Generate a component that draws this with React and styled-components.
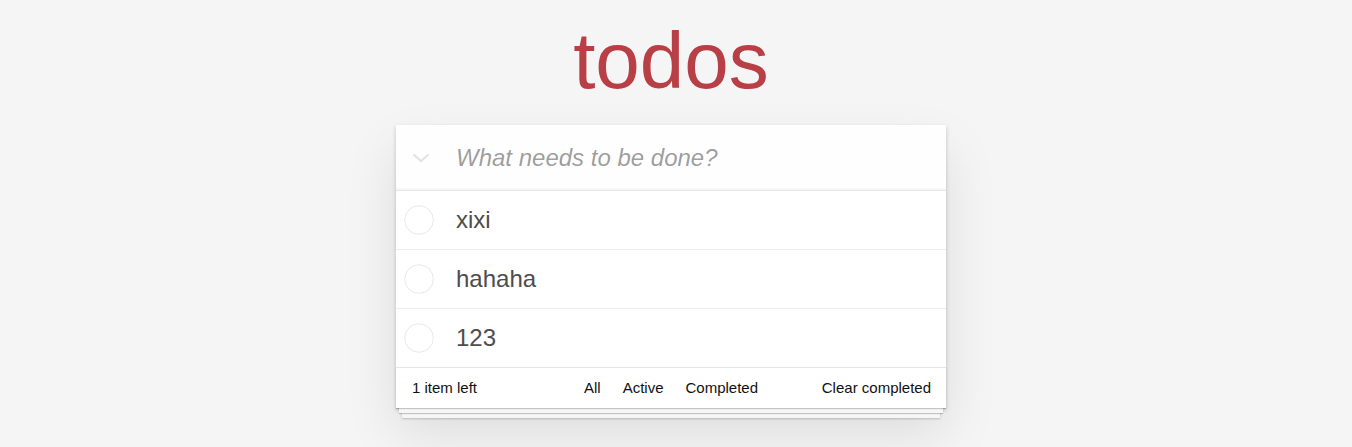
import React from "react";
import styled, { createGlobalStyle } from "styled-components";

const GlobalStyle = createGlobalStyle`
  html, body {
    margin: 0;
    padding: 0;
  }
  body {
    background: #f5f5f5;
    color: #111111;
    font: 14px "Liberation Sans", Arial, Helvetica, sans-serif;
    line-height: 1.4em;
    font-weight: 300;
  }
  * { box-sizing: border-box; }
`;

const Page = styled.div`
  display: flex;
  justify-content: center;
  padding: 15px 10px 40px 0;
`;

const App = styled.section`
  width: 550px;
  display: flex;
  flex-direction: column;
`;

const Title = styled.h1`
  margin: 0 0 18px;
  font-size: 80px;
  line-height: 92px;
  font-weight: 200;
  text-align: center;
  color: #b83f45;
`;

const Card = styled.div`
  background: #fff;
  box-shadow: 0 2px 4px 0 rgba(0, 0, 0, 0.2), 0 25px 50px 0 rgba(0, 0, 0, 0.1);
`;

const NewTodoRow = styled.header`
  display: flex;
  align-items: center;
  height: 65px;
  background: rgba(0, 0, 0, 0.003);
  box-shadow: inset 0 -2px 1px rgba(0, 0, 0, 0.03);
`;

const ToggleAll = styled.label`
  display: flex;
  align-items: center;
  justify-content: center;
  width: 49px;
  height: 65px;
  flex: none;
  cursor: pointer;
`;

const NewTodo = styled.input`
  flex: 1;
  min-width: 0;
  height: 65px;
  margin: 0;
  padding: 16px 16px 16px 11px;
  border: none;
  outline: none;
  background: transparent;
  font-family: inherit;
  font-size: 24px;
  line-height: 1.4em;
  color: #4d4d4d;

  &::placeholder {
    font-style: italic;
    font-weight: 400;
    color: rgba(0, 0, 0, 0.4);
  }
`;

const List = styled.ul`
  margin: 0;
  padding: 0;
  list-style: none;
  border-top: 1px solid #e6e6e6;
`;

const Item = styled.li`
  display: flex;
  align-items: center;
  font-size: 24px;
  border-bottom: 1px solid #ededed;

  &:last-child {
    border-bottom: none;
  }
`;

const Toggle = styled.span`
  display: flex;
  flex: none;
  width: 30px;
  height: 30px;
  margin-left: 8px;
`;

const ItemLabel = styled.label`
  flex: 1;
  padding: 15px 15px 15px 22px;
  line-height: 28px;
  font-weight: 400;
  color: #4d4d4d;
  word-break: break-all;
`;

const Footer = styled.footer`
  display: grid;
  grid-template-columns: 1fr auto 1fr;
  align-items: center;
  height: 41px;
  padding: 10px 15px;
  border-top: 1px solid #e6e6e6;
  font-size: 15px;
  line-height: 19.6px;
  color: #111;
  box-shadow: 0 1px 1px rgba(0, 0, 0, 0.2), 0 8px 0 -3px #f6f6f6,
    0 9px 1px -3px rgba(0, 0, 0, 0.2), 0 16px 0 -6px #f6f6f6,
    0 17px 2px -6px rgba(0, 0, 0, 0.2);
`;

const Count = styled.span`
  justify-self: start;
  padding-left: 1px;
`;

const Filters = styled.ul`
  display: flex;
  margin: 0;
  padding: 0;
  list-style: none;
`;

const FilterLink = styled.a`
  margin: 3px;
  padding: 3px 7px;
  border: 1px solid ${(p) => (p.$selected ? "rgba(175, 47, 47, 0.2)" : "transparent")};
  border-radius: 3px;
  color: inherit;
  text-decoration: none;
`;

const ClearButton = styled.button`
  justify-self: end;
  margin: 0;
  padding: 0;
  border: none;
  background: none;
  font: inherit;
  line-height: 19.6px;
  color: inherit;
  cursor: pointer;
`;

const Chevron = () => (
  <svg width="18" height="10" viewBox="0 0 18 10" aria-hidden="true">
    <polyline
      points="1.5,1.5 9,8 16.5,1.5"
      fill="none"
      stroke="#e3e3e3"
      strokeWidth="2.2"
    />
  </svg>
);

const Circle = () => (
  <svg width="30" height="30" viewBox="0 0 30 30" aria-hidden="true">
    <circle cx="15" cy="15" r="14.3" fill="none" stroke="#e8e8e8" strokeWidth="1" />
  </svg>
);

const todos = ["xixi", "hahaha", "123"];

export default function TodoApp() {
  return (
    <>
      <GlobalStyle />
      <Page>
        <App>
          <Title>todos</Title>
          <Card>
            <NewTodoRow>
              <ToggleAll>
                <Chevron />
              </ToggleAll>
              <NewTodo placeholder="What needs to be done?" />
            </NewTodoRow>
            <List>
              {todos.map((t) => (
                <Item key={t}>
                  <Toggle>
                    <Circle />
                  </Toggle>
                  <ItemLabel>{t}</ItemLabel>
                </Item>
              ))}
            </List>
            <Footer>
              <Count>1 item left</Count>
              <Filters>
                <li><FilterLink href="#/">All</FilterLink></li>
                <li><FilterLink href="#/active">Active</FilterLink></li>
                <li><FilterLink href="#/completed">Completed</FilterLink></li>
              </Filters>
              <ClearButton>Clear completed</ClearButton>
            </Footer>
          </Card>
        </App>
      </Page>
    </>
  );
}
